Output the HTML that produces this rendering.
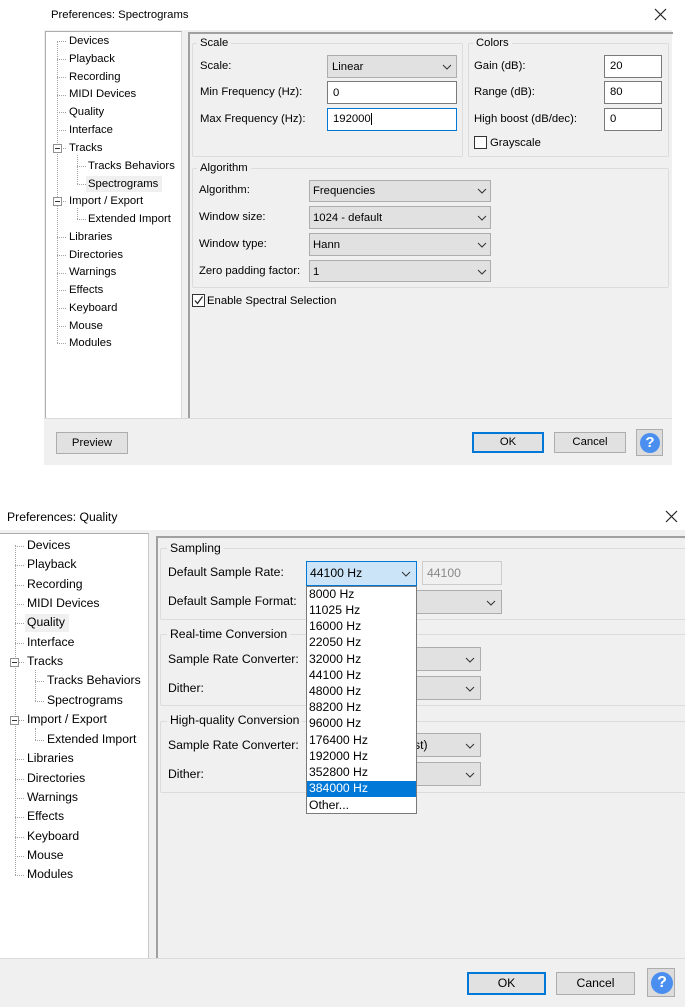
<!DOCTYPE html>
<html><head><meta charset="utf-8"><style>
*{margin:0;padding:0;box-sizing:border-box}
body{width:685px;height:1007px;background:#fff;position:relative;overflow:hidden;font-family:"Liberation Sans",sans-serif;font-size:11.3px;color:#000}
.a{position:absolute}
.t{position:absolute;white-space:nowrap;line-height:14px}
.b13{font-size:12.2px}
.b13 .t{line-height:15px}
.gray{background:#f0f0f0}
.sel{position:absolute;background:#e1e1e1;border:1px solid #adadad}
.inp{position:absolute;background:#fff;border:1px solid #7a7a7a}
.grp{position:absolute;border:1px solid #dcdcdc;border-radius:2px}
.lg{position:absolute;background:#f0f0f0;padding:0 3px;white-space:nowrap}
.chev{position:absolute;width:10px;height:6px}
.vl{position:absolute;border-left:1px dotted #a0a0a0;width:0}
.hl{position:absolute;border-top:1px dotted #a0a0a0;height:0}
.mb{position:absolute;width:9px;height:9px;border:1px solid #919191;background:#fff}
.mb:after{content:"";position:absolute;left:1px;top:3px;width:5px;height:1px;background:#333}
.btn{position:absolute;background:#e1e1e1;border:1px solid #adadad;text-align:center}
.help{position:absolute;background:#dcdcdc;border:1px solid #adadad}
.help span{position:absolute;left:3px;top:3px;border-radius:50%;background:#4a8ff0;color:#fff;font-weight:bold;text-align:center}
</style></head><body>

<!-- TOP DIALOG -->
<div class="a gray" style="left:44px;top:30px;width:628px;height:435px"></div>
<div class="t" style="left:51px;top:8px">Preferences: Spectrograms</div>
<svg class="a" style="left:654px;top:8px" width="13" height="13"><path d="M1 1L12 12M12 1L1 12" stroke="#222" stroke-width="1.2"/></svg>

<div class="a" style="left:45px;top:31px;width:137px;height:388px;background:#fff;border:1px solid #adadad;border-right-color:#dadada"></div>
<div class="vl" style="left:57px;top:41px;height:302px"></div>
<div class="hl" style="left:57px;top:41px;width:9px"></div>
<div class="hl" style="left:57px;top:59px;width:9px"></div>
<div class="hl" style="left:57px;top:77px;width:9px"></div>
<div class="hl" style="left:57px;top:95px;width:9px"></div>
<div class="hl" style="left:57px;top:112px;width:9px"></div>
<div class="hl" style="left:57px;top:130px;width:9px"></div>
<div class="hl" style="left:57px;top:148px;width:9px"></div>
<div class="hl" style="left:57px;top:201px;width:9px"></div>
<div class="hl" style="left:57px;top:237px;width:9px"></div>
<div class="hl" style="left:57px;top:255px;width:9px"></div>
<div class="hl" style="left:57px;top:273px;width:9px"></div>
<div class="hl" style="left:57px;top:290px;width:9px"></div>
<div class="hl" style="left:57px;top:308px;width:9px"></div>
<div class="hl" style="left:57px;top:326px;width:9px"></div>
<div class="hl" style="left:57px;top:343px;width:9px"></div>
<div class="vl" style="left:77px;top:155px;height:29px"></div>
<div class="hl" style="left:77px;top:166px;width:9px"></div>
<div class="hl" style="left:77px;top:184px;width:9px"></div>
<div class="vl" style="left:77px;top:208px;height:11px"></div>
<div class="hl" style="left:77px;top:219px;width:9px"></div>
<div class="mb" style="left:53px;top:144px"></div>
<div class="mb" style="left:53px;top:197px"></div>
<div class="a" style="left:86px;top:176px;width:76px;height:16px;background:#f0f0f0"></div>
<div class="t" style="left:69px;top:34px">Devices</div>
<div class="t" style="left:69px;top:52px">Playback</div>
<div class="t" style="left:69px;top:70px">Recording</div>
<div class="t" style="left:69px;top:87px">MIDI Devices</div>
<div class="t" style="left:69px;top:105px">Quality</div>
<div class="t" style="left:69px;top:123px">Interface</div>
<div class="t" style="left:69px;top:141px">Tracks</div>
<div class="t" style="left:88px;top:159px">Tracks Behaviors</div>
<div class="t" style="left:88px;top:177px">Spectrograms</div>
<div class="t" style="left:69px;top:194px">Import / Export</div>
<div class="t" style="left:88px;top:212px">Extended Import</div>
<div class="t" style="left:69px;top:230px">Libraries</div>
<div class="t" style="left:69px;top:248px">Directories</div>
<div class="t" style="left:69px;top:265px">Warnings</div>
<div class="t" style="left:69px;top:283px">Effects</div>
<div class="t" style="left:69px;top:301px">Keyboard</div>
<div class="t" style="left:69px;top:319px">Mouse</div>
<div class="t" style="left:69px;top:336px">Modules</div>

<div class="a" style="left:188px;top:32px;width:485px;height:387px;border-left:2px solid #a0a0a0;border-top:2px solid #a0a0a0"></div>
<div class="grp" style="left:192px;top:43px;width:271px;height:114px"></div>
<div class="lg" style="left:197px;top:37px">Scale</div>
<div class="grp" style="left:468px;top:43px;width:201px;height:114px"></div>
<div class="lg" style="left:473px;top:37px">Colors</div>
<div class="grp" style="left:192px;top:168px;width:477px;height:120px"></div>
<div class="lg" style="left:197px;top:162px">Algorithm</div>

<div class="t" style="left:200px;top:59px">Scale:</div>
<div class="sel" style="left:327px;top:55px;width:130px;height:23px"></div>
<div class="t" style="left:332px;top:60px">Linear</div>
<svg class="chev" style="left:442px;top:64px"><path d="M1 1L5 5L9 1" fill="none" stroke="#333"/></svg>
<div class="t" style="left:200px;top:85px">Min Frequency (Hz):</div>
<div class="inp" style="left:327px;top:81px;width:130px;height:23px"></div>
<div class="t" style="left:333px;top:86px">0</div>
<div class="t" style="left:200px;top:112px">Max Frequency (Hz):</div>
<div class="inp" style="left:327px;top:108px;width:130px;height:23px;border-color:#0078d7"></div>
<div class="t" style="left:333px;top:112px"><span style="border-right:1px solid #000;padding-right:0">192000</span></div>

<div class="t" style="left:474px;top:59px">Gain (dB):</div>
<div class="inp" style="left:604px;top:55px;width:58px;height:23px"></div>
<div class="t" style="left:610px;top:59px">20</div>
<div class="t" style="left:474px;top:85px">Range (dB):</div>
<div class="inp" style="left:604px;top:81px;width:58px;height:23px"></div>
<div class="t" style="left:610px;top:85px">80</div>
<div class="t" style="left:474px;top:112px">High boost (dB/dec):</div>
<div class="inp" style="left:604px;top:108px;width:58px;height:23px"></div>
<div class="t" style="left:610px;top:112px">0</div>
<div class="a" style="left:474px;top:136px;width:13px;height:13px;border:1px solid #333;background:#fff"></div>
<div class="t" style="left:490px;top:136px">Grayscale</div>

<div class="t" style="left:199px;top:183px">Algorithm:</div>
<div class="sel" style="left:309px;top:180px;width:182px;height:22px"></div>
<div class="t" style="left:313px;top:184px">Frequencies</div>
<svg class="chev" style="left:477px;top:188px"><path d="M1 1L5 5L9 1" fill="none" stroke="#333"/></svg>
<div class="t" style="left:199px;top:210px">Window size:</div>
<div class="sel" style="left:309px;top:206px;width:182px;height:23px"></div>
<div class="t" style="left:313px;top:211px">1024 - default</div>
<svg class="chev" style="left:477px;top:215px"><path d="M1 1L5 5L9 1" fill="none" stroke="#333"/></svg>
<div class="t" style="left:199px;top:237px">Window type:</div>
<div class="sel" style="left:309px;top:233px;width:182px;height:23px"></div>
<div class="t" style="left:313px;top:238px">Hann</div>
<svg class="chev" style="left:477px;top:242px"><path d="M1 1L5 5L9 1" fill="none" stroke="#333"/></svg>
<div class="t" style="left:199px;top:264px">Zero padding factor:</div>
<div class="sel" style="left:309px;top:260px;width:182px;height:22px"></div>
<div class="t" style="left:313px;top:265px">1</div>
<svg class="chev" style="left:477px;top:269px"><path d="M1 1L5 5L9 1" fill="none" stroke="#333"/></svg>

<div class="a" style="left:192px;top:294px;width:13px;height:13px;border:1px solid #333;background:#fff"></div>
<svg class="a" style="left:193px;top:295px" width="11" height="11"><path d="M2 5.5L4.5 8.5L9.5 1.5" fill="none" stroke="#222" stroke-width="1.2"/></svg>
<div class="t" style="left:207px;top:294px">Enable Spectral Selection</div>

<div class="a" style="left:44px;top:418px;width:628px;height:1px;background:#dadada"></div>
<div class="btn" style="left:56px;top:432px;width:72px;height:22px;line-height:20px">Preview</div>
<div class="btn" style="left:472px;top:432px;width:72px;height:21px;line-height:17px;border:2px solid #0078d7">OK</div>
<div class="btn" style="left:554px;top:432px;width:72px;height:21px;line-height:19px">Cancel</div>
<div class="help" style="left:636px;top:429px;width:27px;height:27px"><span style="width:20px;height:20px;line-height:20px;font-size:15px">?</span></div>

<!-- BOTTOM DIALOG -->
<div class="b13">
<div class="a gray" style="left:0;top:530px;width:685px;height:477px"></div>
<div class="t" style="left:7px;top:510px">Preferences: Quality</div>
<svg class="a" style="left:665px;top:510px" width="13" height="13"><path d="M1 1L12 12M12 1L1 12" stroke="#222" stroke-width="1.2"/></svg>

<div class="a" style="left:-1px;top:533px;width:150px;height:426px;background:#fff;border:1px solid #adadad;border-right-color:#c8c8c8"></div>
<div class="vl" style="left:15px;top:545px;height:330px"></div>
<div class="hl" style="left:15px;top:546px;width:9px"></div>
<div class="hl" style="left:15px;top:565px;width:9px"></div>
<div class="hl" style="left:15px;top:585px;width:9px"></div>
<div class="hl" style="left:15px;top:604px;width:9px"></div>
<div class="hl" style="left:15px;top:623px;width:9px"></div>
<div class="hl" style="left:15px;top:643px;width:9px"></div>
<div class="hl" style="left:15px;top:662px;width:9px"></div>
<div class="hl" style="left:15px;top:720px;width:9px"></div>
<div class="hl" style="left:15px;top:759px;width:9px"></div>
<div class="hl" style="left:15px;top:779px;width:9px"></div>
<div class="hl" style="left:15px;top:798px;width:9px"></div>
<div class="hl" style="left:15px;top:817px;width:9px"></div>
<div class="hl" style="left:15px;top:837px;width:9px"></div>
<div class="hl" style="left:15px;top:856px;width:9px"></div>
<div class="hl" style="left:15px;top:875px;width:9px"></div>
<div class="vl" style="left:35px;top:670px;height:31px"></div>
<div class="hl" style="left:35px;top:681px;width:9px"></div>
<div class="hl" style="left:35px;top:701px;width:9px"></div>
<div class="vl" style="left:35px;top:728px;height:12px"></div>
<div class="hl" style="left:35px;top:740px;width:9px"></div>
<div class="mb" style="left:10px;top:658px"></div>
<div class="mb" style="left:10px;top:716px"></div>
<div class="a" style="left:25px;top:614px;width:44px;height:18px;background:#f0f0f0"></div>
<div class="t" style="left:27px;top:538px">Devices</div>
<div class="t" style="left:27px;top:557px">Playback</div>
<div class="t" style="left:27px;top:577px">Recording</div>
<div class="t" style="left:27px;top:596px">MIDI Devices</div>
<div class="t" style="left:27px;top:615px">Quality</div>
<div class="t" style="left:27px;top:635px">Interface</div>
<div class="t" style="left:27px;top:654px">Tracks</div>
<div class="t" style="left:47px;top:673px">Tracks Behaviors</div>
<div class="t" style="left:47px;top:693px">Spectrograms</div>
<div class="t" style="left:27px;top:712px">Import / Export</div>
<div class="t" style="left:47px;top:732px">Extended Import</div>
<div class="t" style="left:27px;top:751px">Libraries</div>
<div class="t" style="left:27px;top:771px">Directories</div>
<div class="t" style="left:27px;top:790px">Warnings</div>
<div class="t" style="left:27px;top:809px">Effects</div>
<div class="t" style="left:27px;top:829px">Keyboard</div>
<div class="t" style="left:27px;top:848px">Mouse</div>
<div class="t" style="left:27px;top:867px">Modules</div>

<div class="a" style="left:156px;top:536px;width:530px;height:423px;border-left:2px solid #a0a0a0;border-top:2px solid #a0a0a0"></div>
<div class="grp" style="left:160px;top:548px;width:530px;height:72px"></div>
<div class="lg" style="left:167px;top:541px">Sampling</div>
<div class="grp" style="left:160px;top:634px;width:530px;height:72px"></div>
<div class="lg" style="left:167px;top:627px">Real-time Conversion</div>
<div class="grp" style="left:160px;top:721px;width:530px;height:72px"></div>
<div class="lg" style="left:167px;top:713px">High-quality Conversion</div>

<div class="t" style="left:168px;top:565px">Default Sample Rate:</div>
<div class="a" style="left:306px;top:561px;width:111px;height:25px;background:#cce4f7;border:1px solid #0078d7"></div>
<div class="t" style="left:310px;top:566px">44100 Hz</div>
<svg class="chev" style="left:401px;top:571px"><path d="M1 1L5 5L9 1" fill="none" stroke="#333"/></svg>
<div class="a" style="left:422px;top:561px;width:80px;height:24px;background:#f0f0f0;border:1px solid #ccc"></div>
<div class="t" style="left:427px;top:566px;color:#888">44100</div>
<div class="t" style="left:168px;top:594px">Default Sample Format:</div>
<div class="sel" style="left:306px;top:590px;width:196px;height:24px"></div>
<svg class="chev" style="left:486px;top:600px"><path d="M1 1L5 5L9 1" fill="none" stroke="#333"/></svg>
<div class="t" style="left:168px;top:652px">Sample Rate Converter:</div>
<div class="sel" style="left:306px;top:647px;width:175px;height:24px"></div>
<svg class="chev" style="left:465px;top:657px"><path d="M1 1L5 5L9 1" fill="none" stroke="#333"/></svg>
<div class="t" style="left:168px;top:681px">Dither:</div>
<div class="sel" style="left:306px;top:676px;width:175px;height:24px"></div>
<svg class="chev" style="left:465px;top:686px"><path d="M1 1L5 5L9 1" fill="none" stroke="#333"/></svg>
<div class="t" style="left:168px;top:738px">Sample Rate Converter:</div>
<div class="sel" style="left:306px;top:733px;width:175px;height:24px"></div>
<div class="t" style="left:414px;top:738px">st)</div>
<svg class="chev" style="left:465px;top:743px"><path d="M1 1L5 5L9 1" fill="none" stroke="#333"/></svg>
<div class="t" style="left:168px;top:767px">Dither:</div>
<div class="sel" style="left:306px;top:762px;width:175px;height:24px"></div>
<svg class="chev" style="left:465px;top:772px"><path d="M1 1L5 5L9 1" fill="none" stroke="#333"/></svg>

<div class="a" style="left:306px;top:586px;width:111px;height:228px;background:#fff;border:1px solid #7a7a7a"></div>
<div class="a" style="left:307px;top:781px;width:109px;height:16px;background:#0078d7"></div>
<div class="t" style="left:309px;top:587px">8000 Hz</div>
<div class="t" style="left:309px;top:603px">11025 Hz</div>
<div class="t" style="left:309px;top:619px">16000 Hz</div>
<div class="t" style="left:309px;top:635px">22050 Hz</div>
<div class="t" style="left:309px;top:652px">32000 Hz</div>
<div class="t" style="left:309px;top:668px">44100 Hz</div>
<div class="t" style="left:309px;top:684px">48000 Hz</div>
<div class="t" style="left:309px;top:700px">88200 Hz</div>
<div class="t" style="left:309px;top:716px">96000 Hz</div>
<div class="t" style="left:309px;top:733px">176400 Hz</div>
<div class="t" style="left:309px;top:749px">192000 Hz</div>
<div class="t" style="left:309px;top:765px">352800 Hz</div>
<div class="t" style="left:309px;top:781px;color:#fff">384000 Hz</div>
<div class="t" style="left:309px;top:798px">Other...</div>

<div class="a" style="left:0;top:958px;width:685px;height:1px;background:#dadada"></div>
<div class="btn" style="left:467px;top:972px;width:79px;height:23px;line-height:19px;border:2px solid #0078d7">OK</div>
<div class="btn" style="left:556px;top:972px;width:79px;height:23px;line-height:21px">Cancel</div>
<div class="help" style="left:647px;top:968px;width:28px;height:29px"><span style="width:22px;height:22px;line-height:22px;font-size:16px">?</span></div>
</div>
</body></html>
